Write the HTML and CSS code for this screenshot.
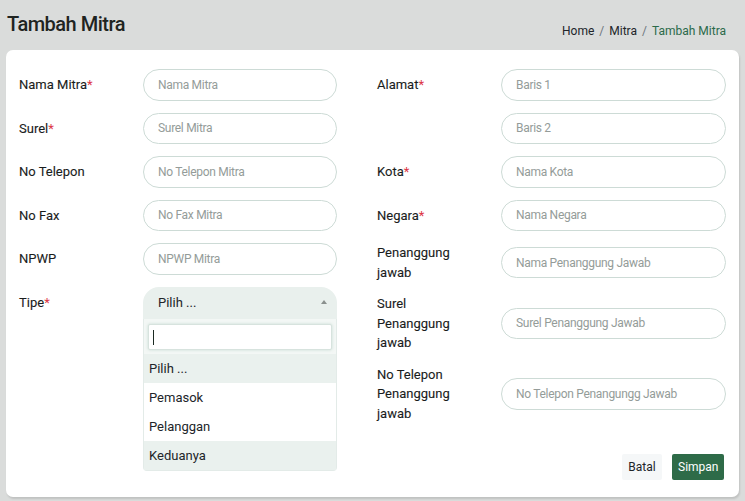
FILE: index.html
```html
<!DOCTYPE html>
<html lang="id">
<head>
<meta charset="utf-8">
<title>Tambah Mitra</title>
<link rel="stylesheet" href="styles.css">
</head>
<body>
<div class="page">
  <div class="header">
    <h1 class="title">Tambah Mitra</h1>
    <nav class="crumbs">
      <span class="crumb">Home</span><span class="sep">/</span><span class="crumb">Mitra</span><span class="sep">/</span><span class="crumb active">Tambah Mitra</span>
    </nav>
  </div>
  <div class="card">
    <div class="cols">
      <div class="col col-left">
        <div class="row"><label class="lbl">Nama Mitra<span class="req">*</span></label><input class="inp" placeholder="Nama Mitra"></div>
        <div class="row"><label class="lbl">Surel<span class="req">*</span></label><input class="inp" placeholder="Surel Mitra"></div>
        <div class="row"><label class="lbl">No Telepon</label><input class="inp" placeholder="No Telepon Mitra"></div>
        <div class="row"><label class="lbl">No Fax</label><input class="inp" placeholder="No Fax Mitra"></div>
        <div class="row"><label class="lbl">NPWP</label><input class="inp" placeholder="NPWP Mitra"></div>
        <div class="row row-top"><label class="lbl lbl-top">Tipe<span class="req">*</span></label>
          <div class="select">
            <div class="select-head"><span>Pilih ...</span><span class="caret"></span></div>
            <div class="dropdown">
              <div class="search-wrap"><div class="search"><span class="cursor"></span></div></div>
              <div class="opt hl">Pilih ...</div>
              <div class="opt">Pemasok</div>
              <div class="opt">Pelanggan</div>
              <div class="opt hl">Keduanya</div>
            </div>
          </div>
        </div>
      </div>
      <div class="col col-right">
        <div class="row"><label class="lbl">Alamat<span class="req">*</span></label><input class="inp" placeholder="Baris 1"></div>
        <div class="row"><label class="lbl"></label><input class="inp" placeholder="Baris 2"></div>
        <div class="row"><label class="lbl">Kota<span class="req">*</span></label><input class="inp" placeholder="Nama Kota"></div>
        <div class="row"><label class="lbl">Negara<span class="req">*</span></label><input class="inp" placeholder="Nama Negara"></div>
        <div class="row"><label class="lbl lbl-wrap">Penanggung jawab</label><input class="inp" placeholder="Nama Penanggung Jawab"></div>
        <div class="row"><label class="lbl lbl-wrap">Surel Penanggung jawab</label><input class="inp" placeholder="Surel Penanggung Jawab"></div>
        <div class="row"><label class="lbl lbl-wrap">No Telepon Penanggung jawab</label><input class="inp" placeholder="No Telepon Penangungg Jawab"></div>
      </div>
    </div>
    <div class="actions">
      <button class="btn btn-light">Batal</button>
      <button class="btn btn-green">Simpan</button>
    </div>
  </div>
</div>
</body>
</html>
```
FILE: styles.css
```css
* { box-sizing: border-box; }
html, body { margin: 0; padding: 0; }
body {
  background: #dadcdb;
  font-family: Roboto, "Liberation Sans", sans-serif;
  color: #212529;
  font-size: 13px;
  line-height: 1.5;
  width: 745px;
  height: 501px;
  overflow: hidden;
}
.page { padding: 0 6px 0 6px; }
.header {
  display: flex;
  justify-content: space-between;
  align-items: flex-end;
  height: 50px;
  padding: 0 13px 10px 1px;
}
.title {
  margin: 0;
  font-size: 20px;
  font-weight: 500;
  letter-spacing: -0.5px;
  line-height: 24px;
  position: relative;
  top: -4px;
  color: #1f2421;
}
.crumbs { font-size: 12px; line-height: 18px; color: #212529; }
.sep { color: #6c757d; margin: 0 5px; }
.crumb.active { color: #2b6a4a; }
.card {
  background: #fff;
  border-radius: 7px;
  box-shadow: 1px 2px 2px rgba(0,0,0,0.12);
  width: 733px;
  height: 447px;
  padding: 19px 12px 0 13px;
}
.cols { display: flex; gap: 40px; }
.col-left { width: 318px; }
.col-right { width: 349px; }
.row {
  display: flex;
  align-items: center;
  min-height: 31.5px;
  margin-bottom: 12px;
}
.row-top { align-items: flex-start; }
.lbl {
  width: 124px;
  flex: none;
  font-weight: 400;
  color: #1a1d1c;
  -webkit-text-stroke: 0.1px #1a1d1c;
  padding-right: 12px;
}
.lbl-wrap { width: 124px; padding-right: 40px; }
.lbl-top { padding-top: 6px; }
.req { color: #dc3545; -webkit-text-stroke: 0; }
.inp {
  flex: 1;
  height: 31.5px;
  border: 1px solid #cddbd6;
  border-radius: 16px;
  padding: 0 14px;
  font-family: inherit;
  font-size: 12px;
  letter-spacing: -0.3px;
  color: #212529;
  background: #fff;
  outline: none;
}
.inp::placeholder { color: #949c99; }
.select { flex: 1; position: relative; height: 32px; }
.select-head {
  height: 32px;
  background: #e9f0ed;
  border-radius: 16px 16px 0 0;
  display: flex;
  align-items: center;
  justify-content: space-between;
  padding: 0 10px 0 15px;
  font-size: 13px;
}
.caret {
  width: 0; height: 0;
  border-left: 3.5px solid transparent;
  border-right: 3.5px solid transparent;
  border-bottom: 4px solid #8a908e;
  margin-top: -2px;
}
.dropdown {
  position: absolute;
  left: 0; right: 0; top: 32px;
  background: #fff;
  border: 1px solid #e3ebe8;
  border-top: none;
  border-radius: 0 0 4px 4px;
  z-index: 5;
}
.search-wrap { padding: 5px 4px 4px 4px; background: #f3f7f5; }
.search {
  height: 26px;
  background: #fff;
  border: 1px solid #d7e3de;
  box-shadow: 0 0 3px rgba(120,170,150,0.35);
  border-radius: 2px;
  padding: 5px 4px;
}
.cursor { display: block; width: 1px; height: 15px; background: #1b2a22; }
.opt {
  height: 29px;
  line-height: 29px;
  padding-left: 5px;
  font-size: 13px;
  color: #212529;
}
.opt.hl { background: #eaf1ee; }
.actions {
  display: flex;
  justify-content: flex-end;
  gap: 10px;
  margin-top: 19px;
  padding-right: 3px;
}
.btn {
  height: 26px;
  border: none;
  border-radius: 2px;
  font-family: inherit;
  font-size: 12px;
  font-weight: 400;
  padding: 0 6px;
}
.btn-light { background: #f5f7f8; color: #212529; width: 40px; }
.btn-green { background: #2e6b48; color: #fff; width: 52px; }
```
